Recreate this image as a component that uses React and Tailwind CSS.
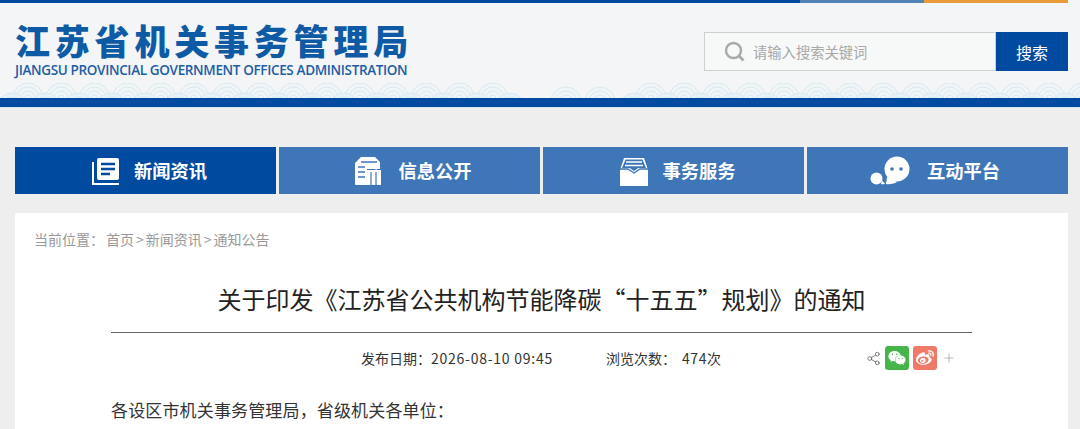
import React from "react";
import { Share2, Plus } from "lucide-react";
import { FaWeixin, FaWeibo } from "react-icons/fa";

const cjk = "font-['Noto_Sans_CJK_SC','Noto_Sans',sans-serif]";

function Scale({ cx, cy, fill = "#f0f6f8", stroke = "#d9e8ee" }) {
  return (
    <g fill={fill} stroke={stroke} strokeWidth="1">
      <circle cx={cx} cy={cy} r="15" />
      <circle cx={cx} cy={cy} r="11" />
      <circle cx={cx} cy={cy} r="7" />
      <circle cx={cx} cy={cy} r="3" />
    </g>
  );
}

function Waves() {
  const top = [];
  for (let x = 28; x < 510; x += 33.2) top.push(x);
  for (let x = 651; x < 1100; x += 33.2) top.push(x);
  const low = [];
  for (let x = 12; x < 530; x += 33.2) low.push(x);
  for (let x = 634; x < 1100; x += 33.2) low.push(x);
  return (
    <svg className="block w-full h-[15px]" viewBox="0 0 1080 15" preserveAspectRatio="none">
      {top.map((x) => <Scale key={x} cx={x} cy={15} />)}
      <Scale cx={566} cy={19} />
      <Scale cx={600} cy={19} />
      {low.map((x) => <Scale key={x} cx={x} cy={25} fill="#e6f2f8" stroke="#d8e9f1" />)}
    </svg>
  );
}

function NewsIcon() {
  return (
    <svg width="30" height="30" viewBox="0 0 30 30" fill="none">
      <path d="M2 6v22h26" stroke="#fff" strokeWidth="2" />
      <rect x="6" y="2" width="22" height="22" rx="2" fill="#fff" />
      <path d="M10 8h14M10 13h14M10 18h9" stroke="#004b9f" strokeWidth="2.4" />
    </svg>
  );
}
function InfoIcon() {
  return (
    <svg width="30" height="30" viewBox="0 0 30 30" fill="none">
      <path d="M8 1h14l5 5v7H14v16H3a1 1 0 0 1-1-1V7z" fill="#fff" />
      <path d="M5 11h7M5 16h7M5 21h7M8 6h16" stroke="#3f76b7" strokeWidth="1.6" />
      <rect x="13" y="14" width="15" height="15" fill="#fff" />
      <path d="M19 11h4v3M18 15v14M23 15v14" stroke="#fff" strokeWidth="1" />
      <path d="M18 16v13M23 16v13" stroke="#3f76b7" strokeWidth="1.2" />
    </svg>
  );
}
function TrayIcon() {
  return (
    <svg width="30" height="30" viewBox="0 0 30 30" fill="none">
      <path d="M1 14 5 2h20l4 12v16H1z" fill="#fff" />
      <path d="M3 12 6.500 3.500h17L27 12H3z" fill="#3f76b7" />
      <path d="M7 6h16M6 9.500h18" stroke="#fff" strokeWidth="1.6" />
      <path d="M1 13h8l6 4 6-4h8" stroke="#3f76b7" strokeWidth="1.3" fill="none" />
      <path d="M10 11.500h10l-5 3.500z" fill="#3f76b7" />
    </svg>
  );
}
function ChatIcon() {
  return (
    <svg width="42" height="30" viewBox="0 0 42 30" fill="none">
      <circle cx="6.500" cy="22.500" r="6" fill="#fff" />
      <path d="M11 28c2 .5 3.500.2 4-.5l-3-3z" fill="#fff" />
      <circle cx="27" cy="13" r="12.500" fill="#fff" />
      <path d="M17 21l-1 7c3 .5 8 0 11-2z" fill="#fff" />
      <circle cx="22" cy="13" r="1.800" fill="#3f76b7" />
      <circle cx="31" cy="13" r="1.800" fill="#3f76b7" />
    </svg>
  );
}

const navItems = [
  { label: "新闻资讯", icon: <NewsIcon />, active: true, cls: "gap-[13px] pl-[7px]" },
  { label: "信息公开", icon: <InfoIcon />, cls: "gap-[15px] pl-[6px]" },
  { label: "事务服务", icon: <TrayIcon />, cls: "gap-[13px] pl-[8px]" },
  { label: "互动平台", icon: <ChatIcon />, cls: "gap-[15px] pr-[5px]" },
];

export default function App() {
  return (
    <div className={`h-[429px] w-[1080px] overflow-hidden bg-[#eeeeee] ${cjk}`}>
      <header className="bg-[#f4f5f6]">
        <div className="flex h-[3px]">
          <div className="w-[800px] bg-[#004b9f]" />
          <div className="w-[124px] bg-[#5283b8]" />
          <div className="w-[144px] bg-[#e99c3c]" />
        </div>
        <div className="flex justify-between pl-[15px] pr-[12px] h-[80px]">
          <div className="pt-[19px]">
            <div className="text-[35px] leading-[36px] font-black text-[#0f5aa5] tracking-[4.8px] whitespace-nowrap">江苏省机关事务管理局</div>
            <div className="mt-[5px] text-[13.5px] leading-[15px] font-semibold text-[#1d5ea6] font-['Open_Sans',sans-serif] tracking-[-0.35px] whitespace-nowrap">JIANGSU PROVINCIAL GOVERNMENT OFFICES ADMINISTRATION</div>
          </div>
          <div className="flex mt-[29px] h-[39px] w-[364px]">
            <div className="flex-1 flex items-center gap-[8px] pl-[19px] bg-[#f7f8f8] border border-[#cfcfcf]">
              <svg width="21" height="21" viewBox="0 0 21 21" fill="none">
                <circle cx="9.500" cy="9.500" r="7.500" stroke="#a9a9a9" strokeWidth="2.400" />
                <path d="M15 15l4.500 4.500" stroke="#a9a9a9" strokeWidth="2.800" />
              </svg>
              <span className="text-[14.300px] text-[#a8a8a8]">请输入搜索关键词</span>
            </div>
            <div className="w-[72px] bg-[#004b9f] text-white text-[16px] flex items-center justify-center">搜索</div>
          </div>
        </div>
        <Waves />
      </header>
      <div className="h-[10px] bg-[#004b9f] border-b border-[#d5e8f0]" />
      <main className="w-[1053px] ml-[15px]">
        <nav className="mt-[39px] grid grid-cols-4 gap-[3px]">
          {navItems.map((n) => (
            <div key={n.label} className={`h-[47px] flex items-center justify-center ${n.cls} ${n.active ? "bg-[#004b9f]" : "bg-[#3f76b7]"}`}>
              {n.icon}
              <span className="text-[18.300px] font-bold text-white">{n.label}</span>
            </div>
          ))}
        </nav>
        <section className="mt-[19px] h-[300px] bg-white">
          <div className="pt-[16px] pl-[19px] text-[14px] leading-[20px] text-[#999999]">当前位置：<span className="ml-[2px]">首页<span className="mx-[2px]">&gt;</span>新闻资讯<span className="mx-[2px]">&gt;</span>通知公告</span></div>
          <h1 className="mt-[32px] text-center text-[24px] leading-[36px] font-normal text-[#222222]">关于印发《江苏省公共机构节能降碳“十五五”规划》的通知</h1>
          <div className="mx-[96px] mt-[15px] border-t border-[#666666]" />
          <div className="mx-[96px] mt-[14px] flex items-center h-[22px] text-[14px] text-[#333333]">
            <span className="ml-[250px]">发布日期：<span className="tracking-[0.75px]">2026-08-10 09:45</span></span>
            <span className="ml-[53px]">浏览次数：<span className="ml-[6px] tracking-[0.6px]">474</span>次</span>
            <div className="ml-[145px] flex items-center">
              <Share2 size={15} strokeWidth={1.300} color="#666666" />
              <span className="ml-[4px] w-[24px] h-[24px] rounded-[3px] bg-[#45b549] flex items-center justify-center"><FaWeixin size={18} color="#ffffff" /></span>
              <span className="ml-[4px] w-[24px] h-[24px] rounded-[3px] bg-[#ef7a68] flex items-center justify-center"><FaWeibo size={18} color="#ffffff" /></span>
              <Plus size={14} strokeWidth={1.200} color="#999999" className="ml-[5px]" />
            </div>
          </div>
          <p className="mx-[96px] mt-[27px] text-[17px] leading-[28px] tracking-[0.15px] text-[#333333]">各设区市机关事务管理局，省级机关各单位：</p>
        </section>
      </main>
    </div>
  );
}
